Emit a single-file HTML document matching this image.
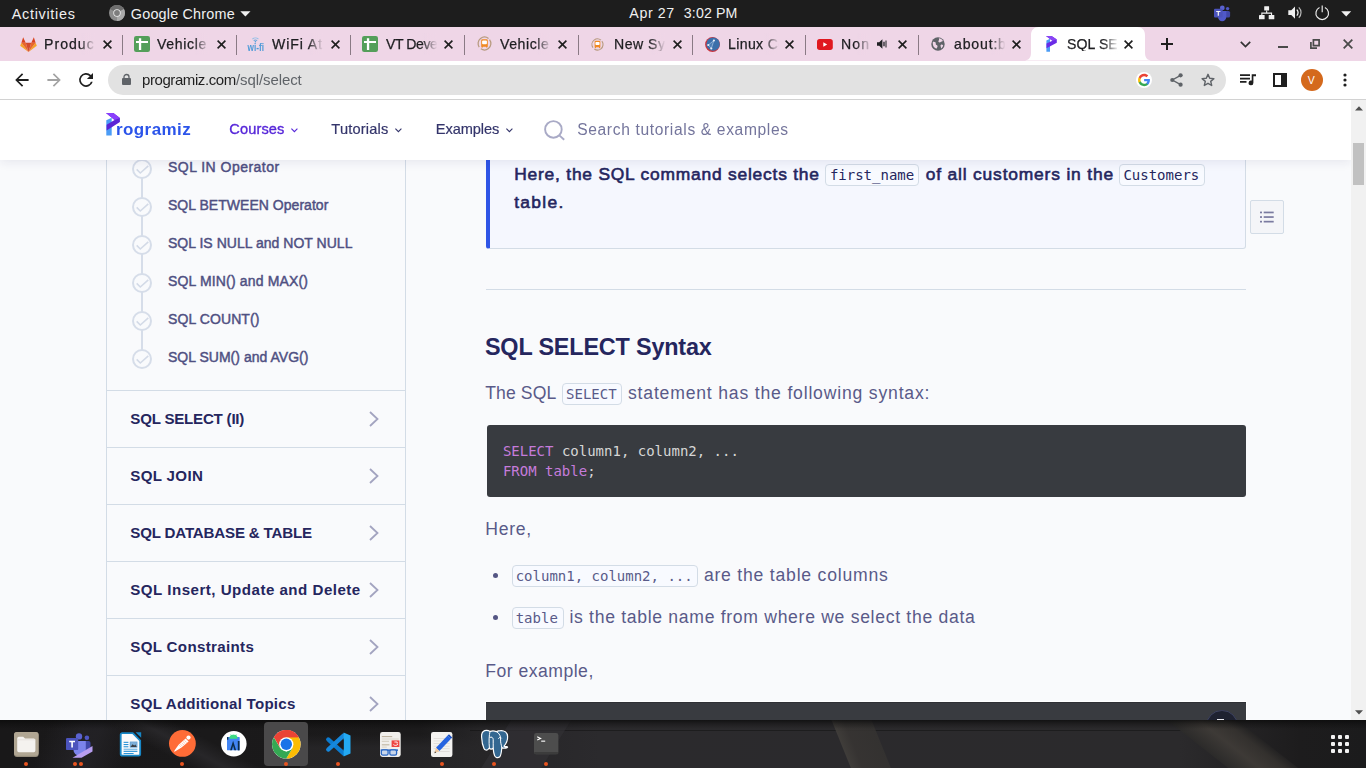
<!DOCTYPE html>
<html lang="en">
<head>
<meta charset="utf-8">
<title>SQL SELECT and SELECT WHERE (With Examples)</title>
<style>

*{box-sizing:border-box;margin:0;padding:0}
html,body{width:1366px;height:768px;overflow:hidden;background:#fff}
body{position:relative;font-family:"Liberation Sans",sans-serif;color:#25265e}
.t{position:absolute;white-space:pre;display:block}
.a{position:absolute;display:block}
svg{position:absolute;display:block;overflow:visible}
#topbar{position:absolute;left:0;top:0;width:1366px;height:27px;background:#1d1d1d}
#tabs{position:absolute;left:0;top:27px;width:1366px;height:34px;background:#efd6e7}
.sep{position:absolute;top:8px;width:1.200px;height:20px;background:#8a7a85}
.fade{position:absolute;top:6px;width:16px;height:22px;background:linear-gradient(90deg,rgba(239,214,231,0),#efd6e7 96%)}
#toolbar{position:absolute;left:0;top:61px;width:1366px;height:39px;background:#fff;border-bottom:1px solid #d2d2d2}
#url{position:absolute;left:108px;top:4px;width:1118px;height:30px;border-radius:15px;background:#e2e2e2}
#page{position:absolute;left:0;top:100px;width:1351px;height:620px;background:#f9fafc;overflow:hidden}
#scroll{position:absolute;left:1351px;top:100px;width:15px;height:620px;background:#f1f1f1}
#hdr{position:absolute;left:0;top:0;width:1351px;height:60px;background:#fff;box-shadow:0 2px 10px rgba(37,38,94,.09)}
#side{position:absolute;left:106px;top:0;width:300px;height:620px;border-left:1px solid #d3dce6;border-right:1px solid #d3dce6}
.hr{position:absolute;height:1px;background:#d3dce6}
.ck{position:absolute;left:131.500px;width:20.400px;height:20.400px;border:2px solid #d6dde9;border-radius:50%;background:#f9fafc}
.vl{position:absolute;left:140.700px;width:2px;background:#d6dde9}
.cb{position:absolute;border:1px solid #d3dce6;border-radius:4px;background:#f8faff}
.pre{position:absolute;left:487px;width:759px;background:#383b40;border-radius:3px}
#dock{position:absolute;left:0;top:720px;width:1366px;height:48px;background:#1b1a1b;overflow:hidden}

</style>
</head>
<body>
<div id="topbar"></div><div id="tabs"></div>
<span class="t" id="t0" style="left:11.75px;top:7.03px;font-size:14.40px;line-height:14.40px;color:#f0f0f0;letter-spacing:0.702px;">Activities</span><span class="t" id="t1" style="left:130.85px;top:7.03px;font-size:14.40px;line-height:14.40px;color:#f0f0f0;letter-spacing:0.184px;">Google Chrome</span><span class="t" id="t2" style="left:629.36px;top:6.02px;font-size:14.20px;line-height:14.20px;color:#f0f0f0;letter-spacing:0.593px;">Apr 27</span><span class="t" id="t3" style="left:683.86px;top:6.02px;font-size:14.20px;line-height:14.20px;color:#f0f0f0;letter-spacing:0.106px;">3:02 PM</span>
<svg style="left:109px;top:5.3px" width="16" height="16" viewBox="0 0 16 16"><circle cx="8" cy="8" r="8" fill="#8c8c8c"/><path d="M8 8 L1.1 4 A8 8 0 0 1 14.9 4 Z" fill="#6e6e6e"/><path d="M8 8 L14.9 4 A8 8 0 0 1 8 16 Z" fill="#a9a9a9"/><circle cx="8" cy="8" r="3.7" fill="#efefef"/><circle cx="8" cy="8" r="2.9" fill="#7d7d7d"/></svg>
<svg style="left:240px;top:11px" width="11" height="6" viewBox="0 0 11 6"><path d="M0.3 0.3h10.2L5.4 5.6z" fill="#f0f0f0"/></svg>
<svg style="left:1213px;top:5px" width="18" height="16" viewBox="0 0 18 16"><circle cx="14.6" cy="3.6" r="1.7" fill="#4f57c4"/><rect x="11.5" y="6" width="5.6" height="6.6" rx="1.6" fill="#4048a8"/><circle cx="9.3" cy="2.9" r="2.4" fill="#5a62d0"/><path d="M5 6h8.3v6a4 4 0 0 1-8.3 0z" fill="#5059c9"/><rect x="1" y="3.8" width="8.6" height="8.6" rx="1" fill="#4b53bc"/><path d="M3.2 6h4.2v1.1H5.9v3.6H4.7V7.1H3.2z" fill="#f2f2f2"/></svg>
<svg style="left:1259px;top:5.6px" width="16" height="14" viewBox="0 0 16 14"><g fill="#f0f0f0"><rect x="5.2" y="0.2" width="4.9" height="4.4" rx=".4"/><rect x="0" y="9" width="5.6" height="4.3" rx=".4"/><rect x="9.7" y="9" width="5.6" height="4.3" rx=".4"/><path d="M7.1 4.5h1.1v2.1h4.9v2.5h-1.1V7.7H3.4v1.4H2.3V6.6h4.8z"/></g></svg>
<svg style="left:1287.5px;top:6.4px" width="16" height="14" viewBox="0 0 16 14"><path d="M0.3 4.2h3L7 0.4v12.4L3.3 9H0.3z" fill="#f0f0f0"/><path d="M8.8 3.6a4.2 4.2 0 0 1 0 6" fill="none" stroke="#f0f0f0" stroke-width="1.3"/><path d="M10.8 1.4a7.2 7.2 0 0 1 0 10.4" fill="none" stroke="#b9b9b9" stroke-width="1.2"/></svg>
<svg style="left:1315px;top:5px" width="15" height="16" viewBox="0 0 15 16"><path d="M4.5 2.6a6.3 6.3 0 1 0 5.4 0" fill="none" stroke="#f0f0f0" stroke-width="1.15"/><path d="M7.2 0.6v6.6" stroke="#f0f0f0" stroke-width="1.15" fill="none"/></svg>
<svg style="left:1341px;top:10.5px" width="11" height="6" viewBox="0 0 11 6"><path d="M0.2 0.3h10L5.2 5.5z" fill="#f0f0f0"/></svg>
<span class="t" id="t4" style="left:43.87px;top:37.02px;font-size:14.10px;line-height:14.10px;color:#1e1e21;letter-spacing:1.023px;-webkit-text-stroke:0.25px #1e1e21;width:51.0px;overflow:hidden;will-change:transform;">Product</span><div class="fade" style="left:80.0px;top:33px"></div><svg style="left:102.5px;top:40px" width="9" height="9" viewBox="0 0 9 9"><path d="M0.6 0.6l7.8 7.8M8.4 0.6L0.6 8.4" stroke="#1f1f1f" stroke-width="1.6" fill="none"/></svg><div class="sep" style="left:122.0px;top:35px"></div><span class="t" id="t5" style="left:157.37px;top:37.02px;font-size:14.10px;line-height:14.10px;color:#1e1e21;letter-spacing:0.636px;-webkit-text-stroke:0.25px #1e1e21;width:51.0px;overflow:hidden;will-change:transform;">Vehicle T</span><div class="fade" style="left:193.5px;top:33px"></div><svg style="left:216.5px;top:40px" width="9" height="9" viewBox="0 0 9 9"><path d="M0.6 0.6l7.8 7.8M8.4 0.6L0.6 8.4" stroke="#1f1f1f" stroke-width="1.6" fill="none"/></svg><div class="sep" style="left:235.8px;top:35px"></div><span class="t" id="t6" style="left:271.57px;top:37.02px;font-size:14.10px;line-height:14.10px;color:#1e1e21;letter-spacing:0.905px;-webkit-text-stroke:0.25px #1e1e21;width:51.0px;overflow:hidden;will-change:transform;">WiFi Att</span><div class="fade" style="left:307.7px;top:33px"></div><svg style="left:330.5px;top:40px" width="9" height="9" viewBox="0 0 9 9"><path d="M0.6 0.6l7.8 7.8M8.4 0.6L0.6 8.4" stroke="#1f1f1f" stroke-width="1.6" fill="none"/></svg><div class="sep" style="left:349.7px;top:35px"></div><span class="t" id="t7" style="left:385.77px;top:37.02px;font-size:14.10px;line-height:14.10px;color:#1e1e21;letter-spacing:-0.452px;-webkit-text-stroke:0.25px #1e1e21;width:51.0px;overflow:hidden;will-change:transform;">VT Devel</span><div class="fade" style="left:421.9px;top:33px"></div><svg style="left:444.3px;top:40px" width="9" height="9" viewBox="0 0 9 9"><path d="M0.6 0.6l7.8 7.8M8.4 0.6L0.6 8.4" stroke="#1f1f1f" stroke-width="1.6" fill="none"/></svg><div class="sep" style="left:463.9px;top:35px"></div><span class="t" id="t8" style="left:499.77px;top:37.02px;font-size:14.10px;line-height:14.10px;color:#1e1e21;letter-spacing:0.569px;-webkit-text-stroke:0.25px #1e1e21;width:51.0px;overflow:hidden;will-change:transform;">Vehicle T</span><div class="fade" style="left:535.9px;top:33px"></div><svg style="left:558.3px;top:40px" width="9" height="9" viewBox="0 0 9 9"><path d="M0.6 0.6l7.8 7.8M8.4 0.6L0.6 8.4" stroke="#1f1f1f" stroke-width="1.6" fill="none"/></svg><div class="sep" style="left:578.0px;top:35px"></div><span class="t" id="t9" style="left:613.67px;top:37.02px;font-size:14.10px;line-height:14.10px;color:#1e1e21;letter-spacing:0.481px;-webkit-text-stroke:0.25px #1e1e21;width:51.0px;overflow:hidden;will-change:transform;">New Sys</span><div class="fade" style="left:649.8px;top:33px"></div><svg style="left:672.5px;top:40px" width="9" height="9" viewBox="0 0 9 9"><path d="M0.6 0.6l7.8 7.8M8.4 0.6L0.6 8.4" stroke="#1f1f1f" stroke-width="1.6" fill="none"/></svg><div class="sep" style="left:692.0px;top:35px"></div><span class="t" id="t10" style="left:727.67px;top:37.02px;font-size:14.10px;line-height:14.10px;color:#1e1e21;letter-spacing:0.362px;-webkit-text-stroke:0.25px #1e1e21;width:51.0px;overflow:hidden;will-change:transform;">Linux Co</span><div class="fade" style="left:763.8px;top:33px"></div><svg style="left:785.3px;top:40px" width="9" height="9" viewBox="0 0 9 9"><path d="M0.6 0.6l7.8 7.8M8.4 0.6L0.6 8.4" stroke="#1f1f1f" stroke-width="1.6" fill="none"/></svg><div class="sep" style="left:805.0px;top:35px"></div><span class="t" id="t11" style="left:840.87px;top:37.02px;font-size:14.10px;line-height:14.10px;color:#1e1e21;letter-spacing:1.155px;-webkit-text-stroke:0.25px #1e1e21;width:30.0px;overflow:hidden;will-change:transform;">Non</span><div class="fade" style="left:856.0px;top:33px"></div><svg style="left:898.1px;top:40px" width="9" height="9" viewBox="0 0 9 9"><path d="M0.6 0.6l7.8 7.8M8.4 0.6L0.6 8.4" stroke="#1f1f1f" stroke-width="1.6" fill="none"/></svg><div class="sep" style="left:918.0px;top:35px"></div><span class="t" id="t12" style="left:953.67px;top:37.02px;font-size:14.10px;line-height:14.10px;color:#1e1e21;letter-spacing:0.823px;-webkit-text-stroke:0.25px #1e1e21;width:51.0px;overflow:hidden;will-change:transform;">about:bl</span><div class="fade" style="left:989.8px;top:33px"></div><svg style="left:1011.5px;top:40px" width="9" height="9" viewBox="0 0 9 9"><path d="M0.6 0.6l7.8 7.8M8.4 0.6L0.6 8.4" stroke="#1f1f1f" stroke-width="1.6" fill="none"/></svg>
<svg style="left:1023px;top:27.400px" width="130" height="33.600" viewBox="0 0 130 33" preserveAspectRatio="none"><path d="M0 33 C6 33 8 30 8 25 V8 C8 3 11 0 16 0 H114 C119 0 122 3 122 8 V25 C122 30 124 33 130 33 Z" fill="#fff"/></svg>
<span class="t" id="t13" style="left:1066.87px;top:37.02px;font-size:14.10px;line-height:14.10px;color:#1e1e21;letter-spacing:0.073px;-webkit-text-stroke:0.25px #1e1e21;width:50.0px;overflow:hidden;will-change:transform;">SQL SEL</span><div class="fade" style="left:1102.500px;top:33px;background:linear-gradient(90deg,rgba(255,255,255,0),#fff 96%)"></div><svg style="left:1124.3px;top:40px" width="9" height="9" viewBox="0 0 9 9"><path d="M0.6 0.6l7.8 7.8M8.4 0.6L0.6 8.4" stroke="#1f1f1f" stroke-width="1.6" fill="none"/></svg>
<svg style="left:19.800px;top:36.500px" width="17" height="15" viewBox="0 0 16.200 14.600"><path d="M0 8.500L1.200 5.600 8.100 14.600z" fill="#f5a326"/><path d="M16.200 8.500L15 5.600 8.100 14.600z" fill="#f5a326"/><path d="M1.200 5.600H5.400L8.100 14.600z" fill="#e8672a"/><path d="M15 5.600H10.800L8.100 14.600z" fill="#e8672a"/><path d="M5.400 5.600h5.400L8.100 14.600z" fill="#d24a2c"/><path d="M2.900 0.300L5.400 5.600H1.200zM13.300 0.300L10.800 5.600H15z" fill="#d9431f"/></svg>
<svg style="left:134px;top:36px" width="16" height="16" viewBox="0 0 16 16"><rect width="16" height="16" rx="2.200" fill="#549f5a"/><path d="M4.900 2.200h2.300V5H14v2.100H7.200v6.800H4.900V7.100H2V5h2.900z" fill="#fff"/></svg>
<svg style="left:362px;top:36px" width="16" height="16" viewBox="0 0 16 16"><rect width="16" height="16" rx="2.200" fill="#549f5a"/><path d="M4.900 2.200h2.300V5H14v2.100H7.200v6.800H4.900V7.100H2V5h2.900z" fill="#fff"/></svg>
<svg style="left:247px;top:36px" width="18" height="16" viewBox="0 0 18 16"><path d="M5.400 3.200a4.300 4.300 0 0 1 6 0" fill="none" stroke="#8fbfe8" stroke-width="1.100"/><path d="M6.700 4.700a2.400 2.400 0 0 1 3.400 0" fill="none" stroke="#6aa9dd" stroke-width="1.100"/><circle cx="8.400" cy="5.800" r=".8" fill="#4d9ad8"/><text x="0.600" y="14.900" font-family="Liberation Sans,sans-serif" font-size="11" font-weight="bold" fill="#4d9ad8" textLength="16.400" lengthAdjust="spacingAndGlyphs">wi-fi</text></svg>
<svg style="left:476.900px;top:36.400px" width="15" height="15" viewBox="0 0 15 15"><circle cx="7.500" cy="7.500" r="6.400" fill="none" stroke="#b79a7e" stroke-width="1.250" stroke-dasharray="17.600 2.500" transform="rotate(-38 7.500 7.500)"/><path d="M4.200 4.400a1.200 1.200 0 0 1 1.200-1.200h4.200a1.200 1.200 0 0 1 1.200 1.200v6.200l-.8 1.200H9.600L9 10.800H6l-.6 1H4.800l-.6-1.200z" fill="#f08a24"/><rect x="5.100" y="4.600" width="4.800" height="3.600" rx=".9" fill="#fff"/></svg>
<svg style="left:591px;top:37.500px" width="13" height="13" viewBox="0 0 15 15"><circle cx="7.500" cy="7.500" r="6.400" fill="none" stroke="#b79a7e" stroke-width="1.250" stroke-dasharray="17.600 2.500" transform="rotate(-38 7.500 7.500)"/><path d="M4.200 4.400a1.200 1.200 0 0 1 1.200-1.200h4.200a1.200 1.200 0 0 1 1.200 1.200v6.200l-.8 1.200H9.600L9 10.800H6l-.6 1H4.800l-.6-1.200z" fill="#f08a24"/><rect x="5.100" y="4.600" width="4.800" height="3.600" rx=".9" fill="#fff"/></svg>
<svg style="left:704.700px;top:36.800px" width="15" height="15" viewBox="0 0 15 15"><circle cx="7.500" cy="7.500" r="7.400" fill="#c9353f"/><circle cx="8.100" cy="7.100" r="6.700" fill="#3b6faa"/><path d="M8.900 3.500L3.300 8l3 3.500zM8.900 3.500" stroke="#a8c4e4" stroke-width=".7" fill="#4c7db5"/><g fill="#e8eef7"><circle cx="8.900" cy="3.500" r="1.100"/><circle cx="3.300" cy="8" r="1.100"/><circle cx="6.300" cy="11.500" r="1.100"/></g></svg>
<svg style="left:817px;top:38.600px" width="16" height="11" viewBox="0 0 16 11"><rect width="15.800" height="11" rx="2.700" fill="#e0181f"/><path d="M6.300 3.300v4.400l3.900-2.200z" fill="#fff"/></svg>
<svg style="left:876.600px;top:38.600px" width="10" height="10" viewBox="0 0 10 10"><path d="M0 3.300h2.200L5.400 0.200v9.600L2.200 6.700H0z" fill="#202124"/><path d="M7 2.700v4.600" stroke="#202124" stroke-width="1.300" fill="none"/><path d="M9 1.500v7" stroke="#3c3c40" stroke-width="1.200" fill="none"/></svg>
<svg style="left:930.900px;top:36.900px" width="14" height="14" viewBox="0 0 15 15"><circle cx="7.500" cy="7.500" r="7.200" fill="#5f6368"/><path d="M2 5.200c1.200-.4 2.200 0 3 .8.400.8-.2 1.600.400 2.400.800.400 1.600.600 1.600 1.600 0 1-.6 1.800-1.200 2.600C3.400 12 1.400 9.200 2 5.200zM8.400 1.400c1.800.2 3.400 1.200 4.400 2.800-.8.600-1.800.4-2.400 1.200-.6.800-1.800.6-2.400-.2-.4-.8.200-1.400.6-2 .2-.6-.2-1.200-.2-1.800zM10.800 8.200c.8-.2 1.600 0 2.200.6-.2 1.400-1 2.600-2 3.400-.4-.6-.2-1.400-.6-2-.4-.8-.2-1.600.4-2z" fill="#efd6e7"/></svg>
<svg style="left:1046px;top:36px" width="11" height="16" viewBox="0 0 11 16"><path d="M0.400 4.600L4 2.800v13H0.400z" fill="#4b9cf5"/><path d="M0 0h5.600L10.800 3.400v3.400L0.500 12.200V7.600l5.900-2.900z" fill="#6a2be6"/><path d="M0 0h5.600L10.800 3.400 6.400 4.700z" fill="#8a45f5"/></svg>

<svg style="left:1161px;top:38.400px" width="12" height="12" viewBox="0 0 12 12"><path d="M6 0v12M0 6h12" stroke="#1f1f1f" stroke-width="2" fill="none"/></svg>
<svg style="left:1239.500px;top:40.500px" width="11" height="7" viewBox="0 0 11 7"><path d="M0.800 0.800L5.500 5.500 10.200 0.800" stroke="#333" stroke-width="1.700" fill="none"/></svg>
<div class="a" style="left:1278px;top:46.300px;width:10px;height:2.200px;background:#4a4a4a"></div>
<svg style="left:1310px;top:39px" width="10" height="10" viewBox="0 0 10 10"><path d="M3.400 0.900h5.700v5.700H3.400z" stroke="#4a4a4a" stroke-width="1.700" fill="none"/><path d="M0.900 3v6.100H7" stroke="#4a4a4a" stroke-width="1.700" fill="none"/></svg>
<svg style="left:1343px;top:39.400px" width="10" height="10" viewBox="0 0 10 10"><path d="M0.700 0.700l8.600 8.600M9.300 0.700L0.700 9.300" stroke="#4a4a4a" stroke-width="1.800" fill="none"/></svg>
<div id="toolbar"><div id="url"></div></div>
<span class="t" id="t14" style="left:141.72px;top:72.03px;font-size:15.00px;line-height:15.00px;color:#1f1f1f;letter-spacing:-0.421px;will-change:transform;">programiz.com</span><span class="t" id="t15" style="left:235.92px;top:72.03px;font-size:15.00px;line-height:15.00px;color:#5f6368;letter-spacing:-0.095px;will-change:transform;">/sql/select</span>
<svg style="left:15px;top:73px" width="14" height="14" viewBox="0 0 14 14"><path d="M13.600 6.100H3.500l4.700-4.700L7 0.200 0.200 7 7 13.800l1.200-1.200-4.700-4.700h10.100z" fill="#1f1f1f"/></svg>
<svg style="left:47px;top:73px" width="14" height="14" viewBox="0 0 14 14"><path d="M0.400 6.100h10.100L5.800 1.400 7 0.200 13.800 7 7 13.800l-1.200-1.200 4.700-4.700H0.400z" fill="#a3a3a3"/></svg>
<svg style="left:79px;top:73px" width="14" height="14" viewBox="0 0 14 14"><path d="M11.900 2.100A6.900 6.900 0 1 0 13.700 8.700h-1.800A5.200 5.200 0 1 1 10.700 3.300L7.900 6.100H14V0z" fill="#1f1f1f"/></svg>
<svg style="left:121.500px;top:73.600px" width="9" height="11" viewBox="0 0 9 11"><rect x="0" y="4" width="9" height="7" rx="1" fill="#5f6368"/><path d="M2 4.400V3a2.500 2.500 0 0 1 5 0v1.400" stroke="#5f6368" stroke-width="1.300" fill="none"/></svg>
<svg style="left:1135.100px;top:70.700px" width="18" height="18" viewBox="0 0 18 18"><circle cx="9" cy="9" r="8" fill="#fff"/><g transform="translate(9 9) scale(1.120) translate(-8.900 -9)"><path d="M14.200 9.100c0-.4 0-.8-.1-1.100H9v2.100h2.900c-.1.700-.5 1.300-1.100 1.700v1.400h1.800c1-1 1.600-2.400 1.600-4.100z" fill="#4285f4"/><path d="M9 14.500c1.500 0 2.700-.5 3.600-1.300l-1.800-1.400c-.5.300-1.100.5-1.800.5-1.400 0-2.600-.9-3-2.200H4.200v1.400c.9 1.800 2.700 3 4.800 3z" fill="#34a853"/><path d="M6 10.100c-.1-.3-.2-.7-.2-1.100s.1-.8.200-1.100V6.500H4.200C3.800 7.300 3.600 8.100 3.600 9s.2 1.700.6 2.500z" fill="#fbbc05"/><path d="M9 5.700c.8 0 1.500.3 2.100.800l1.600-1.600C11.700 4 10.500 3.500 9 3.500c-2.100 0-3.900 1.200-4.800 3L6 7.900c.4-1.300 1.600-2.200 3-2.200z" fill="#ea4335"/></g></svg>
<svg style="left:1170px;top:73px" width="13" height="14" viewBox="0 0 13 14"><g fill="#5f6368"><circle cx="10.600" cy="2.300" r="2.100"/><circle cx="2.300" cy="7" r="2.100"/><circle cx="10.600" cy="11.700" r="2.100"/></g><path d="M10.600 2.300L2.300 7l8.300 4.700" stroke="#5f6368" stroke-width="1.400" fill="none"/></svg>
<svg style="left:1201px;top:73px" width="14" height="14" viewBox="0 0 14 14"><path d="M7 1.300l1.700 3.900 4.200.4-3.200 2.800 1 4.100L7 10.300l-3.700 2.200 1-4.100L1.100 5.600l4.200-.4z" stroke="#5f6368" stroke-width="1.400" fill="none" stroke-linejoin="round"/></svg>
<svg style="left:1240px;top:74px" width="16" height="12" viewBox="0 0 16 12"><path d="M0 0.300h10v1.700H0zM0 3.700h10v1.700H0zM0 7.100h6.500v1.700H0z" fill="#1f1f1f"/><path d="M11.700 0.300H16v1.900h-2.600v6.600a2.400 2.400 0 1 1-1.700-2.200z" fill="#1f1f1f"/></svg>
<svg style="left:1273px;top:73px" width="14" height="14" viewBox="0 0 14 14"><rect x="1" y="1" width="12" height="12" stroke="#1f1f1f" stroke-width="2" fill="none"/><rect x="8" y="1" width="5" height="12" fill="#1f1f1f"/></svg>
<div class="a" style="left:1300.800px;top:68.800px;width:22px;height:22px;border-radius:50%;background:#d4691c"></div>
<svg style="left:1342.500px;top:73px" width="4" height="14" viewBox="0 0 4 14"><g fill="#1f1f1f"><circle cx="2" cy="2" r="1.600"/><circle cx="2" cy="7" r="1.600"/><circle cx="2" cy="12" r="1.600"/></g></svg>
<span class="t" id="t16" style="left:1307.73px;top:75.03px;font-size:10.50px;line-height:10.50px;color:#fff;">V</span><div id="page"><div class="a" style="left:0;top:-100px;width:1351px;height:720px">
<div id="side" style="top:100px"></div>
<div class="vl" style="top:150px;height:208px"></div>
<div class="ck" style="top:158.8px"></div><svg style="left:135.700px;top:164.8px" width="13" height="9" viewBox="0 0 13 9"><path d="M0.700 4.400l3.600 3.600L12.300 0.800" stroke="#d3dae7" stroke-width="1.600" fill="none"/></svg><span class="t" id="t17" style="left:167.97px;top:160.02px;font-size:14.00px;line-height:14.00px;color:#4f5082;letter-spacing:0.473px;-webkit-text-stroke:0.45px #4f5082;">SQL IN Operator</span>
<div class="ck" style="top:196.8px"></div><svg style="left:135.700px;top:202.8px" width="13" height="9" viewBox="0 0 13 9"><path d="M0.700 4.400l3.600 3.600L12.300 0.800" stroke="#d3dae7" stroke-width="1.600" fill="none"/></svg><span class="t" id="t18" style="left:167.97px;top:198.02px;font-size:14.00px;line-height:14.00px;color:#4f5082;letter-spacing:0.032px;-webkit-text-stroke:0.45px #4f5082;">SQL BETWEEN Operator</span>
<div class="ck" style="top:234.8px"></div><svg style="left:135.700px;top:240.8px" width="13" height="9" viewBox="0 0 13 9"><path d="M0.700 4.400l3.600 3.600L12.300 0.800" stroke="#d3dae7" stroke-width="1.600" fill="none"/></svg><span class="t" id="t19" style="left:167.97px;top:236.02px;font-size:14.00px;line-height:14.00px;color:#4f5082;letter-spacing:0.024px;-webkit-text-stroke:0.45px #4f5082;">SQL IS NULL and NOT NULL</span>
<div class="ck" style="top:272.8px"></div><svg style="left:135.700px;top:278.8px" width="13" height="9" viewBox="0 0 13 9"><path d="M0.700 4.400l3.600 3.600L12.300 0.800" stroke="#d3dae7" stroke-width="1.600" fill="none"/></svg><span class="t" id="t20" style="left:167.97px;top:274.02px;font-size:14.00px;line-height:14.00px;color:#4f5082;letter-spacing:0.155px;-webkit-text-stroke:0.45px #4f5082;">SQL MIN() and MAX()</span>
<div class="ck" style="top:310.8px"></div><svg style="left:135.700px;top:316.8px" width="13" height="9" viewBox="0 0 13 9"><path d="M0.700 4.400l3.600 3.600L12.300 0.800" stroke="#d3dae7" stroke-width="1.600" fill="none"/></svg><span class="t" id="t21" style="left:167.97px;top:312.02px;font-size:14.00px;line-height:14.00px;color:#4f5082;letter-spacing:0.098px;-webkit-text-stroke:0.45px #4f5082;">SQL COUNT()</span>
<div class="ck" style="top:348.8px"></div><svg style="left:135.700px;top:354.8px" width="13" height="9" viewBox="0 0 13 9"><path d="M0.700 4.400l3.600 3.600L12.300 0.800" stroke="#d3dae7" stroke-width="1.600" fill="none"/></svg><span class="t" id="t22" style="left:167.97px;top:350.02px;font-size:14.00px;line-height:14.00px;color:#4f5082;letter-spacing:0.023px;-webkit-text-stroke:0.45px #4f5082;">SQL SUM() and AVG()</span>
<div class="hr" style="left:107px;top:390px;width:298px"></div><span class="t" id="t23" style="left:130.32px;top:411.02px;font-size:15.10px;line-height:15.10px;color:#25265e;font-weight:bold;letter-spacing:-0.219px;">SQL SELECT (II)</span><svg style="left:369px;top:411.0px" width="10" height="16" viewBox="0 0 10 16"><path d="M1 1l7.500 7L1 15" stroke="#a3a4c0" stroke-width="1.800" fill="none"/></svg>
<div class="hr" style="left:107px;top:447px;width:298px"></div><span class="t" id="t24" style="left:130.32px;top:468.02px;font-size:15.10px;line-height:15.10px;color:#25265e;font-weight:bold;letter-spacing:0.339px;">SQL JOIN</span><svg style="left:369px;top:468.0px" width="10" height="16" viewBox="0 0 10 16"><path d="M1 1l7.500 7L1 15" stroke="#a3a4c0" stroke-width="1.800" fill="none"/></svg>
<div class="hr" style="left:107px;top:504px;width:298px"></div><span class="t" id="t25" style="left:130.32px;top:525.02px;font-size:15.10px;line-height:15.10px;color:#25265e;font-weight:bold;letter-spacing:-0.173px;">SQL DATABASE &amp; TABLE</span><svg style="left:369px;top:525.0px" width="10" height="16" viewBox="0 0 10 16"><path d="M1 1l7.500 7L1 15" stroke="#a3a4c0" stroke-width="1.800" fill="none"/></svg>
<div class="hr" style="left:107px;top:561px;width:298px"></div><span class="t" id="t26" style="left:130.32px;top:582.02px;font-size:15.10px;line-height:15.10px;color:#25265e;font-weight:bold;letter-spacing:0.494px;">SQL Insert, Update and Delete</span><svg style="left:369px;top:582.0px" width="10" height="16" viewBox="0 0 10 16"><path d="M1 1l7.500 7L1 15" stroke="#a3a4c0" stroke-width="1.800" fill="none"/></svg>
<div class="hr" style="left:107px;top:618px;width:298px"></div><span class="t" id="t27" style="left:130.32px;top:639.02px;font-size:15.10px;line-height:15.10px;color:#25265e;font-weight:bold;letter-spacing:0.339px;">SQL Constraints</span><svg style="left:369px;top:639.0px" width="10" height="16" viewBox="0 0 10 16"><path d="M1 1l7.500 7L1 15" stroke="#a3a4c0" stroke-width="1.800" fill="none"/></svg>
<div class="hr" style="left:107px;top:675px;width:298px"></div><span class="t" id="t28" style="left:130.32px;top:696.02px;font-size:15.10px;line-height:15.10px;color:#25265e;font-weight:bold;letter-spacing:0.258px;">SQL Additional Topics</span><svg style="left:369px;top:696.0px" width="10" height="16" viewBox="0 0 10 16"><path d="M1 1l7.500 7L1 15" stroke="#a3a4c0" stroke-width="1.800" fill="none"/></svg>
<div class="a" style="left:486px;top:120px;width:760px;height:128.500px;background:#f5f7fe;border:1px solid #d3dce6;border-left:4px solid #2f55e6;border-radius:3px"></div>
<span class="t" id="t29" style="left:514.22px;top:166.03px;font-size:17.40px;line-height:17.40px;color:#25265e;letter-spacing:0.784px;-webkit-text-stroke:0.60px #25265e;">Here, the SQL command selects the</span><div class="cb" style="left:825px;top:164px;width:94px;height:21.500px"></div><span class="t" id="t30" style="left:829.88px;top:168.02px;font-size:14.00px;line-height:14.00px;color:#25265e;font-family:'DejaVu Sans Mono','Liberation Mono',monospace;">first_name</span><span class="t" id="t31" style="left:925.72px;top:166.03px;font-size:17.40px;line-height:17.40px;color:#25265e;letter-spacing:0.828px;-webkit-text-stroke:0.60px #25265e;">of all customers in the</span><div class="cb" style="left:1119.300px;top:164px;width:85.500px;height:21.500px"></div><span class="t" id="t32" style="left:1123.38px;top:168.02px;font-size:14.00px;line-height:14.00px;color:#25265e;font-family:'DejaVu Sans Mono','Liberation Mono',monospace;">Customers</span><span class="t" id="t33" style="left:514.22px;top:194.02px;font-size:17.40px;line-height:17.40px;color:#25265e;letter-spacing:1.304px;-webkit-text-stroke:0.60px #25265e;">table.</span><div class="hr" style="left:486px;top:289px;width:760px"></div>
<div class="a" style="left:1250px;top:200px;width:34px;height:34px;background:#f4f5f8;border:1px solid #d3dce6;border-radius:2px"></div><svg style="left:1260px;top:211px" width="14" height="12" viewBox="0 0 14 12"><g fill="#7a7ba0"><rect x="0" y="0.600" width="2" height="1.700"/><rect x="3.700" y="0.600" width="10" height="1.700"/><rect x="0" y="5.200" width="2" height="1.700"/><rect x="3.700" y="5.200" width="10" height="1.700"/><rect x="0" y="9.800" width="2" height="1.700"/><rect x="3.700" y="9.800" width="10" height="1.700"/></g></svg>
<span class="t" id="t34" style="left:484.95px;top:336.03px;font-size:23.40px;line-height:23.40px;color:#25265e;font-weight:bold;letter-spacing:-0.171px;">SQL SELECT Syntax</span><span class="t" id="t35" style="left:485.21px;top:385.03px;font-size:17.60px;line-height:17.60px;color:#595a89;letter-spacing:0.110px;">The SQL</span><div class="cb" style="left:562.300px;top:383px;width:59.400px;height:21.500px"></div><span class="t" id="t36" style="left:566.08px;top:387.02px;font-size:14.00px;line-height:14.00px;color:#595a89;font-family:'DejaVu Sans Mono','Liberation Mono',monospace;">SELECT</span><span class="t" id="t37" style="left:628.01px;top:385.03px;font-size:17.60px;line-height:17.60px;color:#595a89;letter-spacing:0.813px;">statement has the following syntax:</span><div class="pre" style="top:425px;height:72px"></div><span class="t" id="t38" style="left:502.88px;top:444.03px;font-size:14.00px;line-height:14.00px;color:#c57bdb;font-family:'DejaVu Sans Mono','Liberation Mono',monospace;">SELECT</span><span class="t" id="t39" style="left:561.88px;top:444.03px;font-size:14.00px;line-height:14.00px;color:#d6d6d6;font-family:'DejaVu Sans Mono','Liberation Mono',monospace;">column1, column2, ...</span><span class="t" id="t40" style="left:502.88px;top:464.03px;font-size:14.00px;line-height:14.00px;color:#c57bdb;font-family:'DejaVu Sans Mono','Liberation Mono',monospace;">FROM</span><span class="t" id="t41" style="left:544.98px;top:464.03px;font-size:14.00px;line-height:14.00px;color:#c57bdb;font-family:'DejaVu Sans Mono','Liberation Mono',monospace;">table</span><span class="t" id="t42" style="left:587.18px;top:464.03px;font-size:14.00px;line-height:14.00px;color:#d6d6d6;font-family:'DejaVu Sans Mono','Liberation Mono',monospace;">;</span>
<span class="t" id="t43" style="left:485.21px;top:521.03px;font-size:17.60px;line-height:17.60px;color:#595a89;letter-spacing:0.738px;">Here,</span><div class="a" style="left:492.800px;top:572.800px;width:5px;height:5px;border-radius:50%;background:#555684"></div><div class="cb" style="left:512.200px;top:565.200px;width:185.400px;height:21.600px"></div><span class="t" id="t44" style="left:515.68px;top:569.03px;font-size:14.00px;line-height:14.00px;color:#595a89;font-family:'DejaVu Sans Mono','Liberation Mono',monospace;">column1, column2, ...</span><span class="t" id="t45" style="left:703.91px;top:567.03px;font-size:17.60px;line-height:17.60px;color:#595a89;letter-spacing:0.783px;">are the table columns</span><div class="a" style="left:492.800px;top:614.900px;width:5px;height:5px;border-radius:50%;background:#555684"></div><div class="cb" style="left:512.200px;top:607.300px;width:51.500px;height:21.600px"></div><span class="t" id="t46" style="left:515.68px;top:611.02px;font-size:14.00px;line-height:14.00px;color:#595a89;font-family:'DejaVu Sans Mono','Liberation Mono',monospace;">table</span><span class="t" id="t47" style="left:569.41px;top:609.03px;font-size:17.60px;line-height:17.60px;color:#595a89;letter-spacing:0.691px;">is the table name from where we select the data</span>
<span class="t" id="t48" style="left:485.21px;top:663.03px;font-size:17.60px;line-height:17.60px;color:#595a89;letter-spacing:0.492px;">For example,</span><div class="pre" style="left:485px;width:762px;top:701px;height:60px;border-radius:0;border:1px solid #fff;border-bottom:0;background:#393b40;box-shadow:inset 0 1px 0 #2f3035"></div><div class="a" style="left:1206.200px;top:710.200px;width:31.600px;height:31.600px;border-radius:50%;background:#1f2231;border:1px solid #3d4160"></div><div class="a" style="left:1217px;top:719px;width:6.500px;height:1.500px;background:#e8e8ee"></div>
<div id="hdr" style="top:100px"></div>
<svg style="left:106px;top:113px" width="15" height="23" viewBox="0 0 15 23"><path d="M0.300 7.200L5.700 4.800V22.400H0.300z" fill="#4a9cf6"/><path d="M0 0h7.400l6.500 5v4L0.600 17.400v-5.600L8.600 7z" fill="#5b24d6"/><path d="M0 0h7.400l6.500 5L8.600 7z" fill="#8a3ffc"/></svg><span class="t" id="t49" style="left:116.03px;top:121.02px;font-size:17.00px;line-height:17.00px;color:#2b54ea;font-weight:bold;letter-spacing:0.405px;">rogramiz</span><span class="t" id="t50" style="left:229.34px;top:122.04px;font-size:14.60px;line-height:14.60px;color:#5626d9;letter-spacing:0.112px;-webkit-text-stroke:0.35px #5626d9;">Courses</span><span class="t" id="t51" style="left:331.34px;top:122.04px;font-size:14.60px;line-height:14.60px;color:#34356b;letter-spacing:0.199px;-webkit-text-stroke:0.20px #34356b;">Tutorials</span><span class="t" id="t52" style="left:435.84px;top:122.04px;font-size:14.60px;line-height:14.60px;color:#34356b;letter-spacing:-0.081px;-webkit-text-stroke:0.20px #34356b;">Examples</span><svg style="left:291.2px;top:128px" width="7" height="5" viewBox="0 0 7 5"><path d="M0.400 0.600l3 3 3-3" stroke="#5626d9" stroke-width="1.100" fill="none"/></svg><svg style="left:395.2px;top:128px" width="7" height="5" viewBox="0 0 7 5"><path d="M0.400 0.600l3 3 3-3" stroke="#34356b" stroke-width="1.100" fill="none"/></svg><svg style="left:506.3px;top:128px" width="7" height="5" viewBox="0 0 7 5"><path d="M0.400 0.600l3 3 3-3" stroke="#34356b" stroke-width="1.100" fill="none"/></svg><svg style="left:544px;top:119.500px" width="22" height="22" viewBox="0 0 22 22"><circle cx="9.400" cy="9.400" r="8.300" stroke="#a9aac6" stroke-width="1.900" fill="none"/><path d="M15.600 15.600l4.600 4.200" stroke="#a9aac6" stroke-width="1.900" fill="none"/></svg><span class="t" id="t53" style="left:577.20px;top:122.04px;font-size:15.60px;line-height:15.60px;color:#74759c;letter-spacing:0.644px;">Search tutorials &amp; examples</span>
</div></div>
<div id="scroll"></div><div class="a" style="left:1353px;top:143px;width:11px;height:42px;background:#c1c1c1"></div><svg style="left:1354.500px;top:106px" width="8" height="5" viewBox="0 0 8 5"><path d="M4 0.200L8 4.600H0z" fill="#505050"/></svg><svg style="left:1354.500px;top:710px" width="8" height="5" viewBox="0 0 8 5"><path d="M0 0.200h8L4 4.600z" fill="#505050"/></svg>
<div id="dock" style="background:linear-gradient(90deg,#191819 0,#1b1a1b 420px,#262527 480px,#2b2a2d 600px,#2b2a2c 1180px,#1d1c1d 1300px,#1b1b1c 1366px)">
<div class="a" style="left:470px;top:9.500px;width:720px;height:1.600px;background:rgba(8,8,8,.38)"></div>
<div class="a" style="left:842px;top:-6px;width:40px;height:64px;background:linear-gradient(90deg,#43403c,#383533 30%,#353331);opacity:.85;transform:skewX(22deg)"></div>
<div class="a" style="left:1200px;top:-6px;width:70px;height:64px;background:linear-gradient(90deg,#2c2b2a,#403c38 45%,#35322f 80%,#242323);opacity:.9;transform:skewX(52deg)"></div>
<div class="a" style="left:495px;top:-6px;width:60px;height:64px;background:#323134;opacity:.7;transform:skewX(-32deg)"></div>
<div class="a" style="left:40px;top:-6px;width:90px;height:64px;background:linear-gradient(90deg,rgba(36,35,39,0),rgba(36,35,39,.8) 40%,rgba(36,35,39,.8) 60%,rgba(36,35,39,0));transform:skewX(-20deg)"></div>
<div class="a" style="left:150px;top:-6px;width:70px;height:64px;background:linear-gradient(90deg,rgba(44,43,46,0),rgba(44,43,46,.75) 50%,rgba(44,43,46,0));transform:skewX(62deg)"></div>
<div class="a" style="left:300px;top:14px;width:180px;height:34px;background:linear-gradient(180deg,rgba(40,39,41,0),rgba(40,39,41,.8) 40%)"></div>
<div class="a" style="left:0;top:0;width:1366px;height:9px;background:linear-gradient(180deg,rgba(10,10,10,.75),rgba(10,10,10,.35) 45%,rgba(10,10,10,0))"></div>
<div class="a" style="left:263.700px;top:2px;width:44.500px;height:44px;border-radius:4px;background:#4a494a"></div>
<!-- files -->
<svg style="left:13.800px;top:11.500px" width="25" height="25" viewBox="0 0 25 25"><rect width="24.600" height="25" rx="3" fill="#958c7b"/><rect width="24.600" height="23.800" rx="3" fill="#b0a693"/><path d="M3.200 6.400a1.600 1.600 0 0 1 1.600-1.600h4.400l1.800 1.600h8.800a1.600 1.600 0 0 1 1.600 1.600v10.600a1.600 1.600 0 0 1-1.600 1.600H4.800a1.600 1.600 0 0 1-1.600-1.600z" fill="#f4f2ef"/><path d="M3.200 7.800h18.200" stroke="#e3dfd8" stroke-width=".7"/></svg>
<!-- teams -->
<svg style="left:65.500px;top:13px" width="27" height="25" viewBox="0 0 27 25"><circle cx="20.900" cy="4.700" r="2.300" fill="#4f57c4"/><rect x="16.500" y="8" width="8" height="9.500" rx="2" fill="#4048a8"/><circle cx="13" cy="3.400" r="3.200" fill="#5a62d0"/><path d="M7.400 8h12.400v8.500a6.200 6.200 0 0 1-12.400 0z" fill="#7b83eb"/><rect x="0" y="4.900" width="12.200" height="12.200" rx="1.200" fill="#4b53bc"/><path d="M3.200 7.700h5.800v1.500H6.900v5.300H5.300V9.200H3.200z" fill="#fff"/><path d="M6.500 24.700L26.500 12.900v5.600l-11 6.200z" fill="#b79df0"/></svg>
<!-- libreoffice writer -->
<svg style="left:120.200px;top:11.600px" width="22" height="25" viewBox="0 0 22 25"><path d="M2.200 1.200h10.600l7.400 7.400v13.600a1.500 1.500 0 0 1-1.500 1.500H2.200a1.500 1.500 0 0 1-1.500-1.500V2.700a1.500 1.500 0 0 1 1.500-1.500z" fill="#fbfbfb" stroke="#1787c6" stroke-width="1.800" stroke-linejoin="round"/><path d="M15.600 0.200h5.600V5.800z" fill="#1787c6"/><g fill="#2a93d8"><rect x="3.600" y="9.800" width="4.800" height="1.100"/><rect x="3.600" y="12" width="4.800" height="1.100"/><rect x="3.600" y="14.200" width="4.800" height="1.100"/><rect x="3.600" y="16.600" width="13.800" height="1.500" opacity=".55"/><rect x="3.600" y="18.800" width="13.800" height="1.100"/><rect x="3.600" y="21" width="10" height="1"/></g><rect x="9.800" y="9.600" width="7.600" height="6" fill="#5b9bd0"/><rect x="10.400" y="10.200" width="6.400" height="4.800" fill="#7fb0d8"/><path d="M10.400 15l2.200-2.800 1.600 1.400 1.200-1 1.400 2.400z" fill="#3a3f45"/></svg>
<!-- postman -->
<svg style="left:168.700px;top:10.300px" width="27" height="27" viewBox="0 0 27 27"><circle cx="13.400" cy="13.400" r="13.400" fill="#ff6c37"/><circle cx="19.500" cy="7.600" r="2.100" fill="#fff"/><path d="M16.600 8.600L19.600 11.400 12.600 17.400 9.600 14.800z" fill="#fff"/><path d="M9.600 14.800L12.600 17.400 6.400 21.300 5 21.800 5.500 20.400z" fill="#fff"/><path d="M15.400 10.400l2.400 2.200M14 11.600l2.400 2.200M12.600 12.800l2.400 2.200M11.200 14l2.400 2.200" stroke="#ff9a75" stroke-width=".5" fill="none"/></svg>
<!-- android studio -->
<svg style="left:220.900px;top:11.100px" width="26" height="26" viewBox="0 0 26 26"><circle cx="12.800" cy="12.800" r="12.800" fill="#fff"/><path d="M8.400 7.800a4.100 4.100 0 0 1 8.200 0z" fill="#3ddc84"/><path d="M9.600 3.200l1 1.600M15.400 3.200l-1 1.600" stroke="#3ddc84" stroke-width=".6"/><rect x="6" y="6.100" width="12.700" height="13.200" rx=".6" fill="#4285f4"/><rect x="6" y="6.100" width="1.300" height="2.600" fill="#0d2d4a"/><path d="M8.400 7.800a4.100 4.100 0 0 1 8.200 0z" fill="#3ddc84"/><path d="M12.100 9.800L9.100 19.300h1.700l1.300-4.600 1.300 4.600h1.700z" fill="#0d2d4a"/><rect x="16.800" y="10" width="1.700" height="9.400" fill="#0d2d4a"/></svg>
<!-- chrome -->
<svg style="left:271.700px;top:9.700px" width="29" height="29" viewBox="0 0 29 29"><circle cx="14.300" cy="14.300" r="14.300" fill="#fff"/><path d="M14.300 14.300L1.920 7.150A14.300 14.300 0 0 1 26.680 7.150z" fill="#ea4335"/><path d="M14.300 0A14.300 14.300 0 0 1 26.680 7.150H14.300z" fill="#ea4335"/><path d="M26.680 7.150A14.300 14.300 0 0 1 14.300 28.600L20.500 17.900 14.300 7.150z" fill="#fbbc04"/><path d="M14.300 28.600A14.300 14.300 0 0 1 1.920 7.150L8.100 17.900l6.200 3.550 6.200-3.550z" fill="#34a853"/><path d="M14.300 7.150h12.380A14.300 14.300 0 0 0 1.920 7.150l6.180 10.700z" fill="#ea4335"/><circle cx="14.300" cy="14.300" r="7.100" fill="#fff"/><circle cx="14.300" cy="14.300" r="5.700" fill="#1a73e8"/></svg>
<!-- vscode -->
<svg style="left:325.800px;top:11.500px" width="25" height="25" viewBox="0 0 25 25"><path d="M2.200 7.400L17.800 21.600" stroke="#0b7bd0" stroke-width="4.200" stroke-linecap="round" fill="none"/><path d="M2.200 17.600L17.800 3.400" stroke="#1587dc" stroke-width="4.200" stroke-linecap="round" fill="none"/><path d="M17.600 0.400L24.500 3.400V21.600L17.600 24.600z" fill="#23a9f2"/><path d="M17.600 7.600v9.800l-5.600-4.900z" fill="#1d1c1e"/></svg>
<!-- evince -->
<svg style="left:379.700px;top:11.500px" width="21" height="25" viewBox="0 0 21 25"><rect width="20.700" height="25" rx="2.400" fill="#f1efec"/><g fill="#b3a78f"><rect x="1.800" y="4.200" width="10.400" height=".9"/><rect x="1.800" y="12.400" width="7.600" height=".9"/></g><g fill="#d8d2c6"><rect x="1.800" y="6.600" width="17" height=".8"/><rect x="1.800" y="8.800" width="7.200" height="1.200"/><rect x="1.800" y="14.600" width="5" height="1"/></g><rect x="11.600" y="8.400" width="7.800" height="6.600" fill="#ee4540"/><path d="M13.400 12.600c1.400 1.200 3.400 1 4.600-.4M14.400 10h2.800v1.600" stroke="#fff" stroke-width=".9" fill="none"/><path d="M0.600 17.400h17.400v1.500H0.600z" fill="#2a67c4"/><rect x="1.300" y="17.900" width="6.800" height="5.200" rx="1.600" fill="#c9d6ea" stroke="#2a67c4" stroke-width="1.300"/><rect x="9.800" y="17.900" width="6.800" height="5.200" rx="1.600" fill="#c9d6ea" stroke="#2a67c4" stroke-width="1.300"/></svg>
<!-- gedit -->
<svg style="left:431.200px;top:11.500px" width="22" height="25" viewBox="0 0 22 25"><rect width="21.400" height="25" rx="2.200" fill="#f3f2f0"/><g fill="#d9d6d1"><rect x="2.600" y="6" width="16" height=".7"/><rect x="2.600" y="8.600" width="16" height=".7"/><rect x="2.600" y="11.200" width="16" height=".7"/><rect x="2.600" y="13.800" width="16" height=".7"/><rect x="2.600" y="16.400" width="16" height=".7"/><rect x="2.600" y="19" width="16" height=".7"/></g><path d="M16.600 3.600l3.400 3.200L8.400 19l-3.400-3.200z" fill="#2563e0"/><path d="M16.600 3.600l1.400-1.300 3.200 3.200L20 6.800z" fill="#1a4fc0"/><path d="M5 15.800L8.400 19l-5 2.200z" fill="#f0c9a0"/><path d="M3.400 21.200l.7-1.700 1.100 1z" fill="#333"/></svg>
<!-- pgadmin elephant -->
<svg style="left:480.500px;top:10px" width="28" height="29" viewBox="0 0 28 29"><path d="M3.700 0.600C1.500 1.500 0.400 4 0.600 7C0.800 11 1.600 15.500 3 18.500C3.800 20.200 5.600 20.600 7 19.400L8.200 18.200C9.500 19.400 11 19.200 12.200 18.200C12.400 21 12.800 23.600 13.600 25.600C14.400 27.800 17 28.400 18.800 26.800C20.200 25.400 20.400 21.500 20.800 17.600C22 18.200 24.500 18.400 26.400 17.400C26.800 17 26.400 16.600 25.800 16.600C24.800 16.800 23.800 16.600 23 16.200C25.200 13.600 26.800 9.800 26.600 6.400C26.400 2.800 23.600 0.400 19.600 0.600C18 0.600 16.600 1 15.400 1.600C13.600 0.800 11 0.600 9.200 1.400C7.400 0.400 5.400 0.200 3.700 0.600Z" fill="#336791" stroke="#fff" stroke-width="1.200" stroke-linejoin="round"/><path d="M9 1.600C8 5 7.800 12 8.400 18M15.600 1.600C18.600 3.400 20 6.500 19.600 10C19.400 12.500 20.400 15 20.800 17.400M9 7.400C10.500 6.400 12 7.400 12.200 9.400C12.400 12 12 15.500 12.200 18M17.600 8.400C18.400 7 19.800 7 20.400 8" stroke="#fff" stroke-width="1" fill="none" stroke-linecap="round"/></svg>
<!-- terminal -->
<svg style="left:533.800px;top:13.200px" width="25" height="22" viewBox="0 0 25 22"><rect width="24.400" height="21.300" rx="2.400" fill="#4d4d4d"/><rect y="19" width="24.400" height="2.300" rx="1.200" fill="#3c3c3c"/><path d="M3.200 3.800l3.400 1.600-3.400 1.600" stroke="#fff" stroke-width="1.100" fill="none"/><rect x="7.200" y="7.600" width="4" height="1.100" fill="#fff"/></svg>
<div class="a" style="left:24.0px;top:41.800px;width:4px;height:4px;border-radius:50%;background:#e95420"></div><div class="a" style="left:73.0px;top:41.800px;width:4px;height:4px;border-radius:50%;background:#e95420"></div><div class="a" style="left:79.0px;top:41.800px;width:4px;height:4px;border-radius:50%;background:#e95420"></div><div class="a" style="left:180.0px;top:41.800px;width:4px;height:4px;border-radius:50%;background:#e95420"></div><div class="a" style="left:284.0px;top:41.800px;width:4px;height:4px;border-radius:50%;background:#e95420"></div><div class="a" style="left:336.0px;top:41.800px;width:4px;height:4px;border-radius:50%;background:#e95420"></div><div class="a" style="left:440.0px;top:41.800px;width:4px;height:4px;border-radius:50%;background:#e95420"></div><div class="a" style="left:492.0px;top:41.800px;width:4px;height:4px;border-radius:50%;background:#e95420"></div><div class="a" style="left:544.0px;top:41.800px;width:4px;height:4px;border-radius:50%;background:#e95420"></div>
<svg style="left:1331px;top:15px" width="18" height="18" viewBox="0 0 18 18"><g fill="#f2f2f2"><rect x="0" y="0" width="4" height="4" rx="1"/><rect x="7" y="0" width="4" height="4" rx="1"/><rect x="14" y="0" width="4" height="4" rx="1"/><rect x="0" y="7" width="4" height="4" rx="1"/><rect x="7" y="7" width="4" height="4" rx="1"/><rect x="14" y="7" width="4" height="4" rx="1"/><rect x="0" y="14" width="4" height="4" rx="1"/><rect x="7" y="14" width="4" height="4" rx="1"/><rect x="14" y="14" width="4" height="4" rx="1"/></g></svg>
</div>

</body>
</html>
